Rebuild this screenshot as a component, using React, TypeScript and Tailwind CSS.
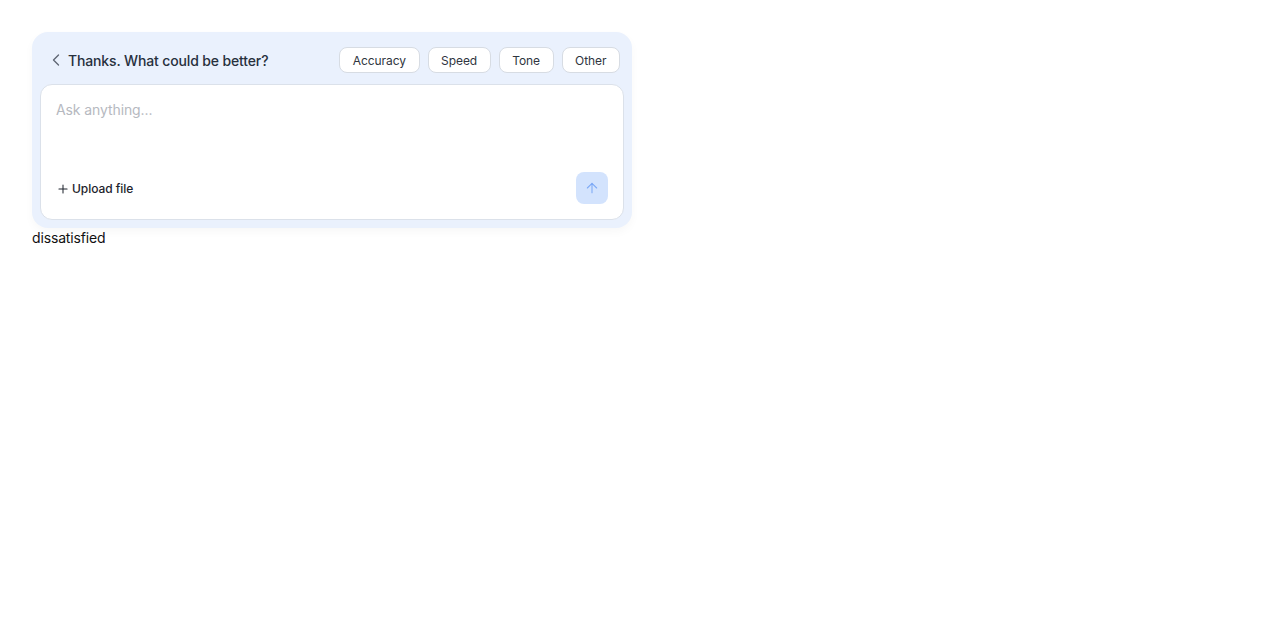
import React from "react";
import { ChevronLeft, Plus, ArrowUp } from "lucide-react";

const reasons = ["Accuracy", "Speed", "Tone", "Other"];

export default function App() {
  return (
    <div className="p-8 font-['Inter',sans-serif]">
      <div className="w-[600px] rounded-2xl bg-[#eaf1fd] px-2 pb-2 shadow-[0_4px_10px_rgba(0,0,0,0.03)]">
        <div className="flex h-[52px] items-center justify-between pl-1.5 pr-1 pt-[4px]">
          <div className="flex items-center gap-[2px]">
            <ChevronLeft size={20} strokeWidth={1.6} className="text-[#5f6673]" />
            <span className="text-[14px] font-medium tracking-[-0.14px] text-[#27303d]">
              Thanks. What could be better?
            </span>
          </div>
          <div className="flex items-center gap-2">
            {reasons.map((r) => (
              <button
                key={r}
                className="h-[26px] rounded-lg border border-[#d7dce3] bg-white px-[12.5px] pt-[1px] text-[12px] tracking-[-0.05px] text-[#2f3540]"
              >
                {r}
              </button>
            ))}
          </div>
        </div>
        <div className="flex h-[136px] flex-col justify-between rounded-xl border border-[#dbe1ea] bg-white px-[15px] pb-[15px] pt-[14px]">
          <div className="text-[14px] tracking-[-0.1px] text-[#b6b9bf]">Ask anything...</div>
          <div className="flex items-center justify-between">
            <button className="flex items-center gap-[2px] pt-[2px] text-[12px] font-medium tracking-[-0.05px] text-[#1d232c]">
              <Plus size={14} strokeWidth={1.75} />
              Upload file
            </button>
            <button className="flex h-8 w-8 items-center justify-center rounded-lg bg-[#d3e3fd] text-[#7eaaf6]">
              <ArrowUp size={16} strokeWidth={1.6} />
            </button>
          </div>
        </div>
      </div>
      <div className="text-[14px] leading-5 tracking-[-0.15px] text-[#111]">dissatisfied</div>
    </div>
  );
}
